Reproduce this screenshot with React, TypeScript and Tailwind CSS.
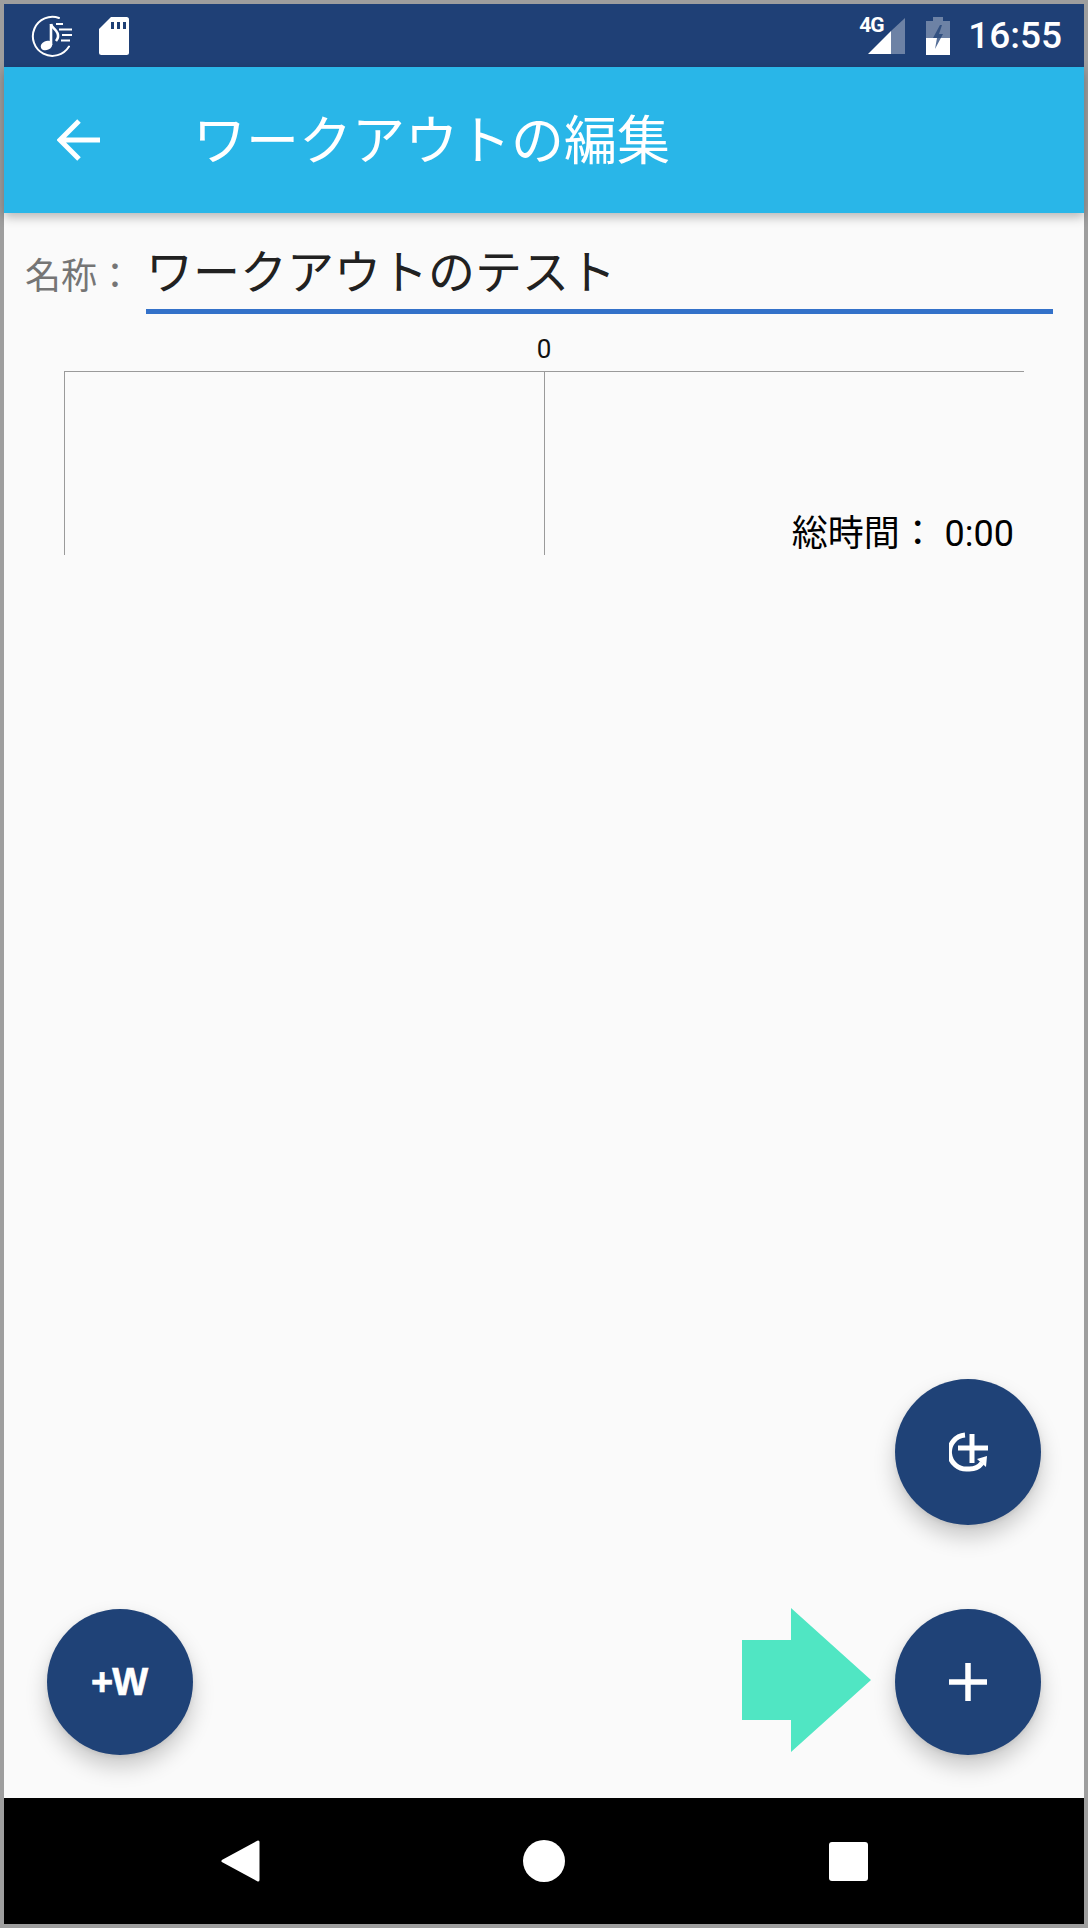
const sansStack = 'font-[Roboto,"Noto_Sans_CJK_JP",sans-serif]';

function MusicIcon() {
  return (
    <svg className="h-[42px] w-[42px]" viewBox="0 0 42 42" fill="none">
      <path d="M38 31.5A19.5 19.5 0 1 1 28 3" stroke="white" strokeWidth="2" strokeLinecap="round" />
      <ellipse cx="15.5" cy="30.5" rx="6" ry="4.5" fill="white" transform="rotate(-24 15.5 30.5)" />
      <path d="M20 30V9" stroke="white" strokeWidth="2.6" />
      <path d="M20 9c1 5 8 6 7 13-.3 2-1.200 3-2 4" stroke="white" strokeWidth="2.6" />
      <path d="M25 9h7M28 14.500h13M31 20h10M30 25.500h9" stroke="white" strokeWidth="2.2" />
    </svg>
  );
}

function SdCardIcon() {
  return (
    <svg className="h-[38px] w-[30px]" viewBox="0 0 30 38">
      <path
        d="M12 0h15.500A2.500 2.500 0 0 1 30 2.500v33a2.500 2.500 0 0 1-2.500 2.500h-25A2.500 2.500 0 0 1 0 35.500V12z"
        fill="white"
      />
      <path d="M12 5h3v7h-3zM18 5h3v7h-3zM24 5h3v7h-3z" fill="#1f4076" />
    </svg>
  );
}

function SignalIcon() {
  return (
    <svg className="h-[36px] w-[37px]" viewBox="0 0 37 36">
      <path d="M23 13 37 0v36H23z" fill="white" fillOpacity="0.35" />
      <path d="M23 13v23H0z" fill="white" />
    </svg>
  );
}

function BatteryIcon() {
  return (
    <svg className="h-[38px] w-[24px]" viewBox="0 0 24 38">
      <path d="M0 4h7V0h10v4h7v17H0z" fill="white" fillOpacity="0.35" />
      <path d="M0 21h24v17H0z" fill="white" />
      <path d="M14 8 7 21h4l-2 11 8-15h-4l3-9z" fill="#1f4076" fillOpacity="0.75" />
    </svg>
  );
}

function AddLoopIcon() {
  return (
    <svg className="ml-[4px] mt-[2px] h-[42px] w-[42px]" viewBox="0 0 42 42" fill="none">
      <path d="M16 3A17 17 0 0 0 19 37c6 .4 11-2 14-6" stroke="white" strokeWidth="5" />
      <path d="M9 16h30M23 2v29" stroke="white" strokeWidth="5" />
      <path d="M28 27l10-3-1 11z" fill="white" />
    </svg>
  );
}

function Fab({ children }: { children: React.ReactNode }) {
  return (
    <button
      className="flex h-[146px] w-[146px] items-center justify-center rounded-full bg-[#1f4277] shadow-[0_12px_22px_rgba(0,0,0,0.2),0_2px_5px_rgba(0,0,0,0.08)]"
      type="button"
    >
      {children}
    </button>
  );
}

export default function App() {
  return (
    <div className={`flex h-[1928px] w-[1088px] flex-col border-4 border-[#9e9e9e] bg-[#fafafa] ${sansStack}`}>
      {/* status bar */}
      <div className="flex h-[63px] shrink-0 items-center bg-[#1f4076] pl-[27px] pr-[22px]">
        <MusicIcon />
        <div className="ml-[26px]">
          <SdCardIcon />
        </div>
        <div className="relative ml-auto">
          <span className="absolute left-[-9px] top-[-3px] text-[21px] font-bold leading-[20px] tracking-[-1px] text-white">
            4G
          </span>
          <SignalIcon />
        </div>
        <div className="ml-[21px]">
          <BatteryIcon />
        </div>
        <span className="ml-[18px] text-[37px] font-medium leading-none text-white">16:55</span>
      </div>

      {/* app bar */}
      <div className="z-10 flex h-[146px] shrink-0 items-center bg-[#29b6e8] pl-[53px] shadow-[0_4px_10px_rgba(0,0,0,0.28)]">
        <svg className="h-[44px] w-[44px]" viewBox="0 0 44 44" fill="none">
          <path d="M43 22H4M22 3 3 22l19 19" stroke="white" strokeWidth="5" />
        </svg>
        <h1 className="ml-[92px] mt-[4px] text-[53px] font-normal leading-none text-white">ワークアウトの編集</h1>
      </div>

      {/* body */}
      <main className="relative flex-1">
        <div className="flex h-[101px] items-start pl-[21px] pr-[31px] pt-[33px]">
          <span className="mt-[4px] w-[121px] shrink-0 text-[36px] leading-[54px] text-[#757575]">名称：</span>
          <div className="mt-[-1px] h-[69px] flex-1 border-b-[5px] border-[#3371c9] text-[47px] leading-[56px] text-[#212121]">
            ワークアウトのテスト
          </div>
        </div>

        <div className="ml-[60px] w-[960px]">
          <div className="h-[57px] pt-[21px] text-center text-[26px] leading-[28px] text-[#111]">0</div>
          <div className="flex h-[184px] border-l border-t border-[#9a9a9a]">
            <div className="w-[480px] border-r border-[#9a9a9a]" />
            <div className="flex flex-1 items-end justify-end pr-[10px] text-[36px] leading-[42px] text-black">
              総時間： 0:00
            </div>
          </div>
        </div>

        <div className="absolute left-[891px] top-[1166px]">
          <Fab>
            <AddLoopIcon />
          </Fab>
        </div>
        <div className="absolute left-[43px] top-[1396px]">
          <Fab>
            <span className="mr-[2px] font-['Liberation_Sans'] text-[38px] font-bold leading-none tracking-[-1px] text-white [-webkit-text-stroke:0.6px_white]">
              +W
            </span>
          </Fab>
        </div>
        <div className="absolute left-[891px] top-[1396px]">
          <Fab>
            <svg className="h-[38px] w-[38px]" viewBox="0 0 38 38" fill="none">
              <path d="M0 19h38M19 0v38" stroke="white" strokeWidth="5.500" />
            </svg>
          </Fab>
        </div>
        <svg className="absolute left-[738px] top-[1395px] h-[144px] w-[130px]" viewBox="0 0 130 144">
          <path d="M0 32h49V0l80 72-80 72v-32H0z" fill="#50e6c3" />
        </svg>
      </main>

      {/* nav bar */}
      <div className="flex h-[126px] shrink-0 items-center bg-black pl-[217px]">
        <svg className="h-[42px] w-[40px]" viewBox="0 0 40 42">
          <path d="M2 21 37 2v38z" fill="white" stroke="white" strokeWidth="3" strokeLinejoin="round" />
        </svg>
        <div className="ml-[262px] h-[42px] w-[42px] rounded-full bg-white" />
        <div className="ml-[264px] h-[39px] w-[39px] rounded-[3px] bg-white" />
      </div>
    </div>
  );
}
